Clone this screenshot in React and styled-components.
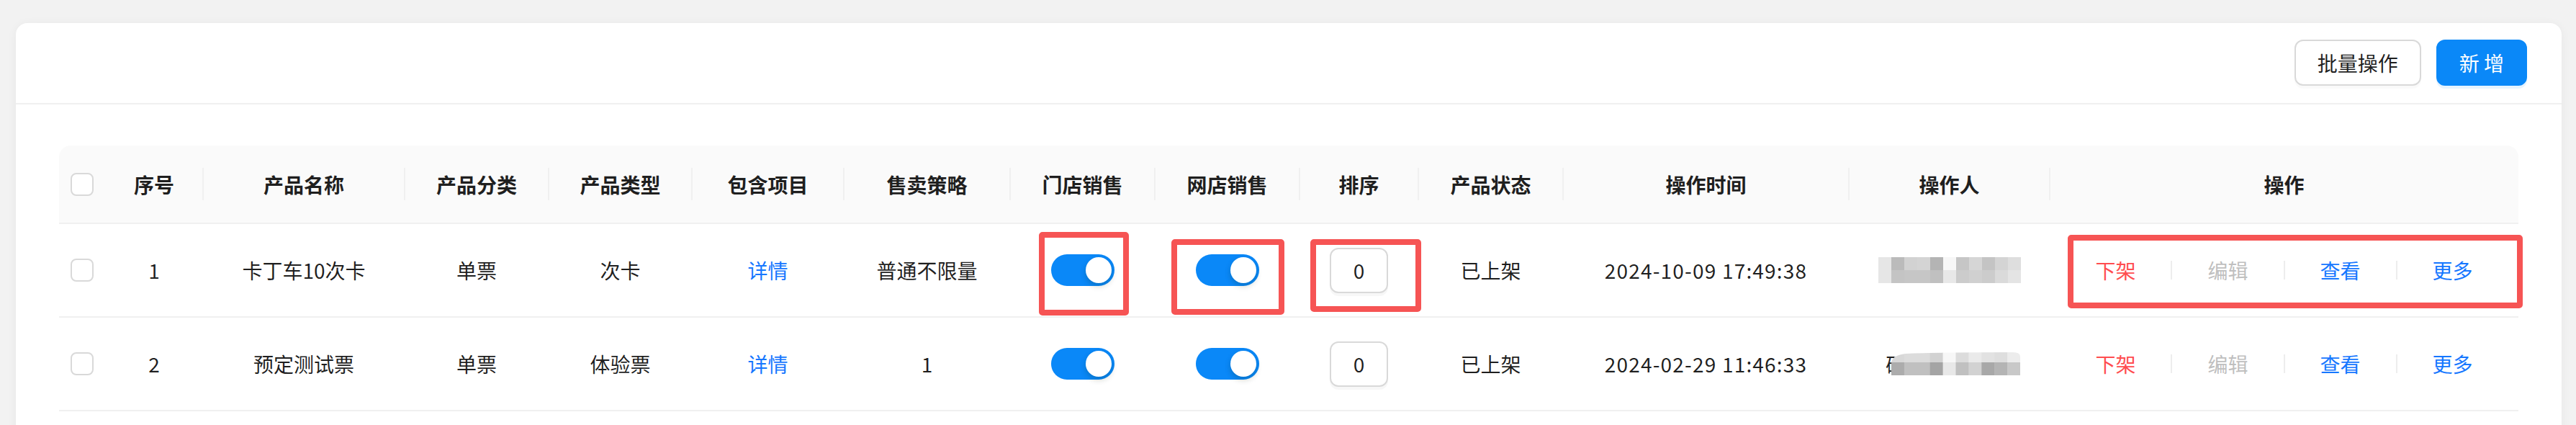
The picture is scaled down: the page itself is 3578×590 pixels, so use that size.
import React from 'react'
import styled, { createGlobalStyle } from 'styled-components'

const GlobalStyle = createGlobalStyle`
  html, body {
    margin: 0;
    padding: 0;
    background: #f2f2f2;
  }
  body {
    font-family: "Noto Sans CJK SC", "Noto Sans", sans-serif;
    overflow: hidden;
  }
  * {
    box-sizing: border-box;
  }
`;

const COLUMNS = '64px 136px 280px 200px 199px 211px 231px 201px 201px 165px 201px 397px 279px 651px';

const Page = styled.div`
  padding: 32px 20px 0 22px;
  height: 590px;
`;

const Card = styled.div`
  background: #fff;
  border-radius: 16px;
  box-shadow: 0 2px 14px rgba(0, 0, 0, 0.05);
  min-height: 620px;
`;

const CardHeader = styled.div`
  display: flex;
  justify-content: flex-end;
  align-items: center;
  gap: 21px;
  padding: 23px 48px 24px;
  border-bottom: 2px solid #f0f0f0;
`;

const Button = styled.button`
  height: 64px;
  padding: 0 30px;
  font-family: inherit;
  font-size: 28px;
  border-radius: 12px;
  border: 2px solid ${p => (p.$primary ? '#0a88f8' : '#d9d9d9')};
  background: ${p => (p.$primary ? '#0a88f8' : '#fff')};
  color: ${p => (p.$primary ? '#fff' : 'rgba(0, 0, 0, 0.88)')};
  box-shadow: 0 4px 0 ${p => (p.$primary ? 'rgba(5, 145, 255, 0.1)' : 'rgba(0, 0, 0, 0.02)')};
  cursor: pointer;
`;

const Table = styled.div`
  margin: 57px 60px 0;
`;

const Row = styled.div`
  display: grid;
  grid-template-columns: ${COLUMNS};
`;

const HeadRow = styled(Row)`
  background: #fafafa;
  border-radius: 16px 16px 0 0;
`;

const HeadCell = styled.div`
  position: relative;
  height: 109px;
  display: flex;
  align-items: center;
  justify-content: center;
  font-size: 28px;
  font-weight: 600;
  color: #1f1f1f;
  border-bottom: 2px solid #f0f0f0;

  &::after {
    content: '';
    display: ${p => (p.$sep ? 'block' : 'none')};
    position: absolute;
    right: -1px;
    top: 31px;
    width: 2px;
    height: 45px;
    background: #f0f0f0;
  }
`;

const Cell = styled.div`
  position: relative;
  height: 130px;
  display: flex;
  align-items: center;
  justify-content: center;
  font-size: 28px;
  letter-spacing: ${p => p.$spacing || 0}px;
  color: ${p => p.$color || 'rgba(0, 0, 0, 0.88)'};
  border-bottom: 2px solid #f0f0f0;
`;

const Checkbox = styled.span`
  display: block;
  width: 32px;
  height: 32px;
  border: 2px solid #d9d9d9;
  border-radius: 8px;
  background: #fff;
`;

const Switch = styled.span`
  display: flex;
  justify-content: flex-end;
  align-items: center;
  width: 88px;
  height: 44px;
  padding: 4px;
  border-radius: 22px;
  background: #0a88f8;
`;

const Knob = styled.span`
  display: block;
  width: 36px;
  height: 36px;
  border-radius: 50%;
  background: #fff;
  box-shadow: 0 4px 8px rgba(0, 35, 11, 0.2);
`;

const SortInput = styled.span`
  display: flex;
  align-items: center;
  justify-content: center;
  width: 81px;
  height: 63px;
  border: 2px solid #d9d9d9;
  border-radius: 12px;
  background: #fff;
  box-shadow: 0 4px 0 rgba(0, 0, 0, 0.03);
  font-size: 28px;
  color: rgba(0, 0, 0, 0.88);
`;

const Actions = styled.div`
  display: flex;
  align-items: center;
  gap: 49px;
`;

const ActionLink = styled.a`
  font-size: 28px;
  color: ${p => p.$color};
  cursor: pointer;
`;

const Split = styled.span`
  display: block;
  width: 2px;
  height: 26px;
  background: #ededed;
`;

const NameWrap = styled.span`
  position: relative;
  display: block;
  width: ${p => p.$width}px;
  height: 40px;
  margin-left: ${p => p.$offset || 0}px;
  line-height: 40px;
`;

const MosaicLayer = styled.svg`
  position: absolute;
  top: ${p => p.$top}px;
  left: ${p => p.$left}px;
`;

const Highlight = styled.span`
  position: absolute;
  left: ${p => p.$x}px;
  top: ${p => p.$y}px;
  width: ${p => p.$w}px;
  height: ${p => p.$h}px;
  border: 8px solid #f65454;
  border-radius: 5px;
  pointer-events: none;
  z-index: 2;
`;

const mosaicA = [
  ['#e6e6e6', '#bbbbbb', '#d2d2d2', '#d4d4d4', '#b4b4b4', '#f7f7f7', '#c6c6c6', '#d6d6d6', '#c4c4c4', '#d4d4d4', '#dedede'],
  ['#e6e6e6', '#c4c4c4', '#c6c6c6', '#c6c6c6', '#c0c0c0', '#e8e8e8', '#cccccc', '#d0d0d0', '#cccccc', '#dadada', '#e4e4e4'],
];

const mosaicB = [
  ['#d8d8d8', '#dcdcdc', '#dcdcdc', '#d2d2d2', '#f7f7f7', '#dcdcdc', '#eaeaea', '#e2e2e2', '#dedede', '#ececec'],
  ['#acacac', '#c0c0c0', '#c0c0c0', '#a4a4a4', '#e8e8e8', '#c0c0c0', '#d2d2d2', '#a8a8a8', '#b4b4b4', '#c8c8c8'],
];

function Mosaic({ rows, rowHeights, width, clip, top = 0, left = 0 }) {
  const cols = rows[0].length;
  const cw = width / cols;
  const height = rowHeights[0] + rowHeights[1];
  return (
    <MosaicLayer width={width} height={height} $top={top} $left={left} viewBox={`0 0 ${width} ${height}`}>
      {clip && (
        <defs>
          <clipPath id="mosaic-clip">
            <path d={`M0 ${height} V16 Q0 4 20 2 Q60 0 ${width - 10} 0 Q${width} 0 ${width} 6 V${height} Z`} />
          </clipPath>
        </defs>
      )}
      <g clipPath={clip ? 'url(#mosaic-clip)' : undefined}>
        {rows.map((row, r) =>
          row.map((fill, c) => (
            <rect
              key={`${r}-${c}`}
              x={c * cw}
              y={r === 0 ? 0 : rowHeights[0]}
              width={cw + 0.5}
              height={rowHeights[r] + 0.5}
              fill={fill}
            />
          ))
        )}
      </g>
    </MosaicLayer>
  );
}

const headers = [
  '', '序号', '产品名称', '产品分类', '产品类型', '包含项目', '售卖策略',
  '门店销售', '网店销售', '排序', '产品状态', '操作时间', '操作人', '操作',
];

const rows = [
  {
    no: 1, name: '卡丁车10次卡', category: '单票', type: '次卡', strategy: '普通不限量',
    time: '2024-10-09 17:49:38', highlight: true,
  },
  {
    no: 2, name: '预定测试票', category: '单票', type: '体验票', strategy: '1',
    time: '2024-02-29 11:46:33', highlight: false,
  },
];

function OperatorName({ index }) {
  if (index === 0) {
    return (
      <NameWrap $width={198}>
        <Mosaic rows={mosaicA} rowHeights={[18, 18]} width={198} top={2} />
      </NameWrap>
    );
  }
  return (
    <NameWrap $width={187} $offset={10}>
      砳
      <Mosaic rows={mosaicB} rowHeights={[14, 18]} width={179} clip top={4} left={8} />
    </NameWrap>
  );
}

export default function App() {
  return (
    <Page>
      <GlobalStyle />
      <Card>
        <CardHeader>
          <Button>批量操作</Button>
          <Button $primary>新 增</Button>
        </CardHeader>
        <Table>
          <HeadRow>
            {headers.map((h, i) => (
              <HeadCell key={i} $sep={i > 0 && i < headers.length - 1}>
                {i === 0 ? <Checkbox /> : h}
              </HeadCell>
            ))}
          </HeadRow>
          {rows.map((row, i) => (
            <Row key={row.no}>
              <Cell><Checkbox /></Cell>
              <Cell>{row.no}</Cell>
              <Cell>{row.name}</Cell>
              <Cell>{row.category}</Cell>
              <Cell>{row.type}</Cell>
              <Cell $color="#1677ff">详情</Cell>
              <Cell>{row.strategy}</Cell>
              <Cell>
                <Switch><Knob /></Switch>
                {row.highlight && <Highlight $x={40} $y={11} $w={125} $h={116} />}
              </Cell>
              <Cell>
                <Switch><Knob /></Switch>
                {row.highlight && <Highlight $x={23} $y={21} $w={157} $h={105} />}
              </Cell>
              <Cell>
                <SortInput>0</SortInput>
                {row.highlight && <Highlight $x={15} $y={21} $w={154} $h={101} />}
              </Cell>
              <Cell>已上架</Cell>
              <Cell $spacing={1.2}>{row.time}</Cell>
              <Cell><OperatorName index={i} /></Cell>
              <Cell>
                <Actions>
                  <ActionLink $color="#ff4d4f">下架</ActionLink>
                  <Split />
                  <ActionLink $color="#bfbfbf">编辑</ActionLink>
                  <Split />
                  <ActionLink $color="#1677ff">查看</ActionLink>
                  <Split />
                  <ActionLink $color="#1677ff">更多</ActionLink>
                </Actions>
                {row.highlight && <Highlight $x={25} $y={15} $w={632} $h={102} />}
              </Cell>
            </Row>
          ))}
        </Table>
      </Card>
    </Page>
  );
}
